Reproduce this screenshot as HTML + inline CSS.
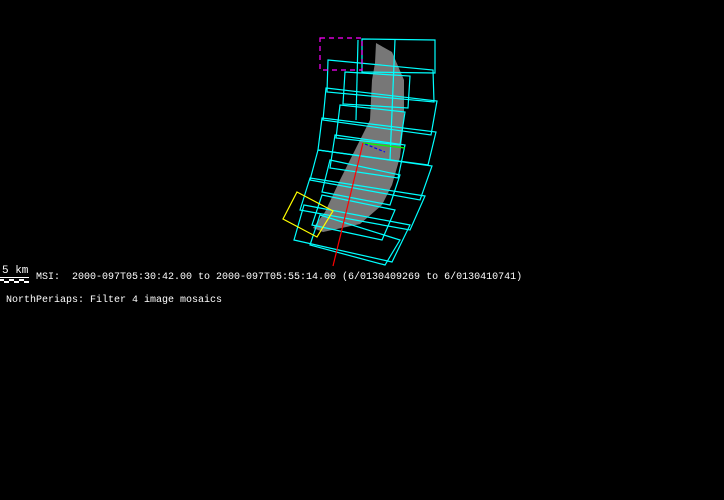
<!DOCTYPE html>
<html><head><meta charset="utf-8"><style>
html,body{margin:0;padding:0;background:#000;width:724px;height:500px;overflow:hidden}
.t{position:absolute;color:#fff;font-family:"Liberation Mono","DejaVu Sans Mono",monospace;font-size:10px;line-height:12px;white-space:pre}
</style></head><body>
<svg width="724" height="500" style="position:absolute;left:0;top:0">
<polygon points="376,43 392,52 404,80 404,120 400,157 392,185 382,205 360,224 323,232 313,228 325,212 340,180 355,150 370,120 372,80 375,63" fill="#777"/>
<g fill="none" stroke="#0ff" stroke-width="1.2">
<polygon points="362,39 435,40 435,73 362,72"/>
<polygon points="328,60 433,70 434,102 327,92"/>
<polygon points="345,72 410,76 408,108 343,104"/>
<polygon points="326,88 437,101 431,135 323,120"/>
<polygon points="340,105 405,112 400,145 336,138"/>
<polygon points="322,118 436,132 428,165 318,150"/>
<polygon points="335,135 405,145 398,178 330,168"/>
<polygon points="318,150 432,166 420,200 310,180"/>
<polygon points="330,160 400,175 390,205 322,192"/>
<polygon points="310,178 425,196 410,230 300,210"/>
<polygon points="322,195 395,210 382,240 312,225"/>
<polygon points="304,205 410,225 392,262 294,240"/>
<polygon points="320,215 400,240 385,265 310,245"/>
<line x1="358" y1="40" x2="356" y2="120"/>
<line x1="395" y1="40" x2="390" y2="160"/>
</g>
<polygon points="320,38 362,38 362,70 320,70" fill="none" stroke="#f0f" stroke-width="1.2" stroke-dasharray="5,4"/>
<polygon points="297,192 333,211 317,237 283,219" fill="none" stroke="#ff0" stroke-width="1.2"/>
<line x1="363" y1="143" x2="405" y2="148" stroke="#0f0" stroke-width="1.2"/>
<line x1="365" y1="144" x2="385" y2="152" stroke="#00f" stroke-width="1.2" stroke-dasharray="3,2"/>
<line x1="363" y1="143" x2="333" y2="266" stroke="#f00" stroke-width="1.2"/>
<line x1="0" y1="277.5" x2="29" y2="277.5" stroke="#fff"/>
<rect x="0" y="279" width="29" height="4" fill="#fff"/>
<rect x="4" y="279" width="5" height="2" fill="#000"/>
<rect x="14" y="279" width="5" height="2" fill="#000"/>
<rect x="24" y="279" width="5" height="2" fill="#000"/>
<rect x="0" y="281" width="4" height="2" fill="#000"/>
<rect x="9" y="281" width="5" height="2" fill="#000"/>
<rect x="19" y="281" width="5" height="2" fill="#000"/>
</svg>
<div class="t" style="left:2px;top:265px;font-size:11px">5 km</div>
<div class="t" style="left:36px;top:272px">MSI:  2000-097T05:30:42.00 to 2000-097T05:55:14.00 (6/0130409269 to 6/0130410741)</div>
<div class="t" style="left:6px;top:295px">NorthPeriaps: Filter 4 image mosaics</div>
</body></html>
